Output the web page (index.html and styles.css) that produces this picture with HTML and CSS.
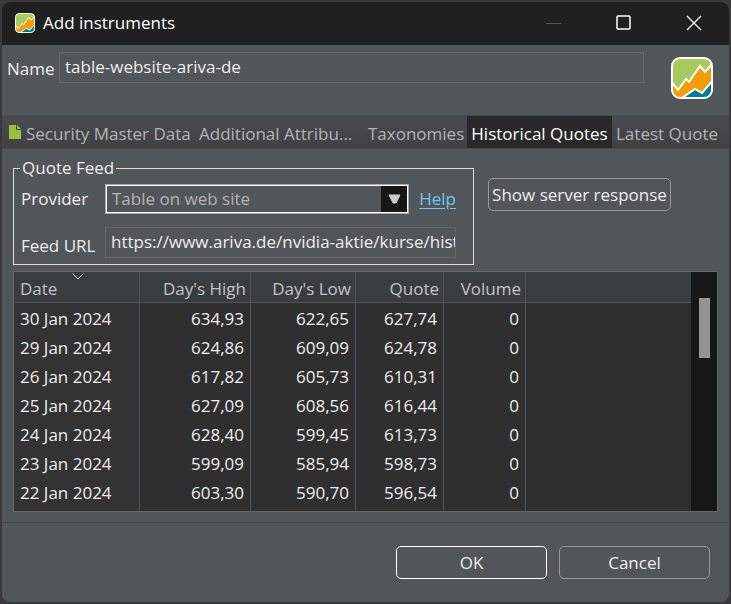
FILE: index.html
```
<!DOCTYPE html>
<html lang="en">
<head>
<meta charset="utf-8">
<title>Add instruments</title>
<link rel="stylesheet" href="styles.css">
</head>
<body>
<svg class="defs" aria-hidden="true">
  <symbol id="logo" viewBox="0 0 42 42">
    <clipPath id="logo-shape"><rect x="1" y="1" width="40" height="40" rx="8"/></clipPath>
    <g clip-path="url(#logo-shape)">
      <rect width="42" height="42" fill="#a8c95f"/>
      <path d="M0 24 7 33 15 22 18 25 29 9 34 15 42 6V43H0Z" fill="#f59c00" stroke="#fff" stroke-width="2"/>
      <path d="M8 43 24 32 31 36 42 23V43Z" fill="#007d9c" stroke="#fff" stroke-width="2"/>
    </g>
    <rect x="1" y="1" width="40" height="40" rx="8" fill="none" stroke="#fff" stroke-width="2"/>
  </symbol>
</svg>
<main class="window">
  <header class="titlebar">
    <svg class="title-logo"><use href="#logo"/></svg>
    <h1>Add instruments</h1>
    <button class="caption" aria-label="Minimize" disabled><svg width="16" height="16"><path d="M0 8.500H15" stroke="#555"/></svg></button>
    <button class="caption" aria-label="Maximize"><svg width="16" height="16"><rect x="1" y="1" width="13" height="13" rx="1" fill="none" stroke="#fff" stroke-width="1.500"/></svg></button>
    <button class="caption" aria-label="Close"><svg width="16" height="16"><path d="M1 1 15 15M15 1 1 15" stroke="#fff" stroke-width="1.300"/></svg></button>
  </header>
  <section class="head">
    <label for="name">Name</label>
    <input class="field name" id="name" value="table-website-ariva-de">
    <svg class="head-logo"><use href="#logo"/></svg>
  </section>
  <nav class="tabs" role="tablist">
    <button class="tab master" role="tab"><svg width="12" height="14"><path d="M0 0H7V5H12V14H0Z" fill="#98c13f"/><path d="M8 0 12 4H8Z" fill="#98c13f"/></svg>Security Master Data</button>
    <button class="tab attributes" role="tab">Additional Attribu...</button>
    <button class="tab taxonomies" role="tab">Taxonomies</button>
    <button class="tab selected" role="tab" aria-selected="true">Historical Quotes</button>
    <button class="tab latest" role="tab">Latest Quote</button>
  </nav>
  <section class="content">
    <div class="feed-row">
      <fieldset class="feed">
        <legend>Quote Feed</legend>
        <label for="provider">Provider</label>
        <div class="provider-row">
          <div class="combo">
            <select id="provider"><option>Table on web site</option></select>
            <span class="arrow"><svg width="13" height="10"><path d="M1 1H12L8 9H5Z" fill="#ccc" stroke="#ccc" stroke-linejoin="round"/></svg></span>
          </div>
          <a href="#help">Help</a>
        </div>
        <label for="url">Feed URL</label>
        <input class="field url" id="url" value="https://www.ariva.de/nvidia-aktie/kurse/hist">
      </fieldset>
      <button class="button response">Show server response</button>
    </div>
    <div class="grid">
      <table>
        <colgroup><col class="c-date"><col class="c-high"><col class="c-low"><col class="c-quote"><col class="c-volume"><col></colgroup>
        <thead><tr><th class="date">Date<svg class="sort" width="12" height="7"><path d="M.5.500 6 6 11.500.500" fill="none" stroke="#ddd"/></svg></th><th>Day's High</th><th>Day's Low</th><th>Quote</th><th>Volume</th><th></th></tr></thead>
        <tbody>
          <tr><td>30 Jan 2024</td><td>634,93</td><td>622,65</td><td>627,74</td><td>0</td><td></td></tr>
          <tr><td>29 Jan 2024</td><td>624,86</td><td>609,09</td><td>624,78</td><td>0</td><td></td></tr>
          <tr><td>26 Jan 2024</td><td>617,82</td><td>605,73</td><td>610,31</td><td>0</td><td></td></tr>
          <tr><td>25 Jan 2024</td><td>627,09</td><td>608,56</td><td>616,44</td><td>0</td><td></td></tr>
          <tr><td>24 Jan 2024</td><td>628,40</td><td>599,45</td><td>613,73</td><td>0</td><td></td></tr>
          <tr><td>23 Jan 2024</td><td>599,09</td><td>585,94</td><td>598,73</td><td>0</td><td></td></tr>
          <tr class="last"><td>22 Jan 2024</td><td>603,30</td><td>590,70</td><td>596,54</td><td>0</td><td></td></tr>
        </tbody>
      </table>
      <div class="scrollbar"><div class="thumb"></div></div>
    </div>
  </section>
  <footer class="actions">
    <button class="button primary">OK</button>
    <button class="button">Cancel</button>
  </footer>
</main>
</body>
</html>
```
FILE: styles.css
```
* { box-sizing: border-box; }
body {
  margin: 0;
  padding: 2px;
  min-height: 100vh;
  display: flex;
  background: #3a3a3a;
  color: #eee;
  font: 17px/24px "Open Sans", "Noto Sans", sans-serif;
}
button, input, select { font: inherit; color: inherit; margin: 0; }
button { padding: 0; border: 0; background: none; white-space: nowrap; }
svg { display: block; flex: none; }
.defs { position: absolute; width: 0; height: 0; }
.window {
  flex: 1;
  min-width: 0;
  display: flex;
  flex-direction: column;
  background: #515658;
  border-radius: 8px;
  overflow: hidden;
}
.titlebar {
  display: flex;
  align-items: center;
  height: 43px;
  padding: 0 0 2px 13px;
  background: #202020;
}
.title-logo { width: 20px; height: 20px; }
h1 { flex: 1; margin: 0 0 0 8px; font-size: 17px; font-weight: 400; color: #fff; }
.caption { width: 70px; height: 41px; display: flex; align-items: center; justify-content: center; }
.head {
  display: flex;
  align-items: flex-start;
  height: 70px;
  padding: 7px 16px 0 5px;
}
.head label { width: 52px; padding-top: 5px; }
.field {
  height: 31px;
  min-width: 0;
  padding: 0 0 2px 5px;
  border: 1px solid #666564;
  border-radius: 0;
  background: transparent;
  outline: 0;
}
.name { flex: 1; }
.head-logo { width: 42px; height: 42px; margin: 5px 0 0 27px; }
.tabs {
  display: flex;
  height: 34px;
  padding-left: 1px;
  background: linear-gradient(#4a4b4f, #414144);
  border-top: 1px solid #4a4b4e;
  border-bottom: 1px solid #4c4b4e;
}
.tab { display: flex; align-items: center; color: #b4b4b4; padding-top: 4px; }
.tab svg { margin: 0 5px 4px 0; }
.master { width: 192px; padding-left: 6px; }
.attributes { width: 169px; padding-left: 4px; }
.taxonomies { width: 103px; padding-left: 4px; }
.selected { width: 145px; justify-content: center; background: #292929; color: #fff; }
.latest { padding-left: 4px; }
.content { padding: 7px 11px 10px; border-bottom: 1px solid #484b4d; }
.feed-row { display: flex; align-items: flex-start; gap: 14px; }
.feed {
  width: 461px;
  min-width: 0;
  margin: 0;
  padding: 4px 17px 6px 7px;
  border: 1px solid #ddd;
  display: grid;
  grid-template-columns: 84px 1fr;
  row-gap: 13px;
}
.feed legend { padding: 0 2px; margin-left: -1px; }
.feed label { align-self: center; }
.feed label[for="url"] { align-self: end; }
.provider-row { display: flex; align-items: center; justify-content: space-between; }
.combo { position: relative; width: 304px; border: 1px solid #aaa; display: flex; }
.combo select {
  flex: 1;
  height: 28px;
  padding: 0 30px 0 5px;
  border: 1px solid #fff;
  border-radius: 0;
  appearance: none;
  background: #515658;
  color: #b4b4b4;
  outline: 0;
}
.arrow {
  position: absolute;
  inset: 1px 1px 1px auto;
  width: 26px;
  background: #171717;
  display: grid;
  place-items: center;
  pointer-events: none;
}
a { color: #6fc5ee; text-underline-offset: 3px; }
.button {
  width: 151px;
  height: 33px;
  border: 1px solid #999;
  border-radius: 5px;
}
.response { width: 183px; margin-top: 22px; }
.primary { border-color: #fff; }
.grid {
  display: flex;
  margin-top: 6px;
  border: 1px solid #6a6867;
  background: #2f2f2f;
}
table { flex: 1; table-layout: fixed; border-collapse: separate; border-spacing: 0; width: 100%; }
.c-date { width: 126px; }
.c-high { width: 111px; }
.c-low { width: 105px; }
.c-quote { width: 88px; }
.c-volume { width: 82px; }
th, td { padding: 0 6px; text-align: right; font-weight: 400; white-space: nowrap; border-right: 1px solid #4c545c; }
th {
  position: relative;
  height: 31px;
  padding: 3px 4px 0 6px;
  background: #383d3f;
  color: #c4c4c4;
  border-right-color: #505354;
  border-bottom: 1px solid #505354;
}
td { height: 29px; padding-top: 2px; }
.last td { height: 34px; padding-bottom: 5px; }
th:first-child, td:first-child { text-align: left; }
td:first-child { background: #333; }
th:last-child, td:last-child { border-right: 0; }
.sort { position: absolute; left: 58px; top: 1px; }
.scrollbar { width: 26px; padding: 26px 7px 0 8px; background: #171717; }
.thumb { height: 60px; background: #949494; }
.actions {
  display: flex;
  justify-content: flex-end;
  gap: 12px;
  padding: 23px 19px;
}
```
